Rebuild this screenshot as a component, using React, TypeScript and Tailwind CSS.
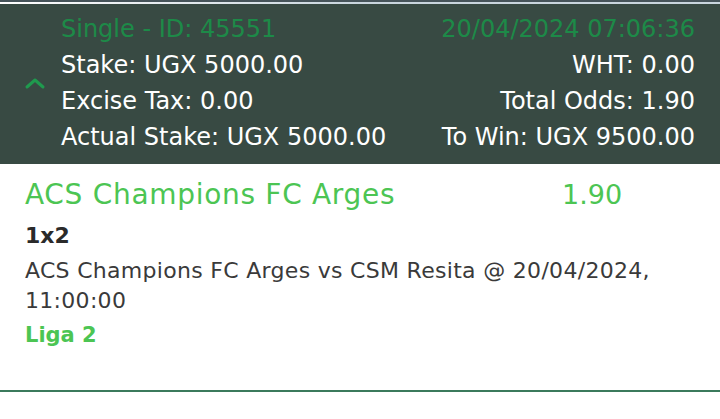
import React from "react";

const font = { fontFamily: '"DejaVu Sans", "Noto Sans", sans-serif' };

function Row({ left, right, className = "" }: { left: string; right: string; className?: string }) {
  return (
    <div className={"flex justify-between items-center h-[36px] " + className}>
      <span>{left}</span>
      <span>{right}</span>
    </div>
  );
}

export default function App() {
  return (
    <div className="w-[720px] h-[419px] bg-white overflow-hidden" style={font}>
      <div className="h-[2px] bg-[#46545a]" />
      <div className="h-[2px] bg-gradient-to-r from-[#ffffff] via-[#c9d6de] to-[#c9d6de]" />
      <div className="bg-[#384a43] flex pt-[7px] pb-[9px] pr-[25px]">
        <div className="w-[61px] flex items-center justify-center pl-[8px]">
          <svg width="22" height="14" viewBox="0 0 22 14" fill="none">
            <path d="M3 11 L11 4 L19 11" stroke="#1f9a4e" strokeWidth="3" strokeLinecap="round" strokeLinejoin="round" />
          </svg>
        </div>
        <div className="flex-1 text-[24px] text-white">
          <Row left="Single - ID: 45551" right="20/04/2024 07:06:36" className="text-[#1d8a48]" />
          <Row left="Stake: UGX 5000.00" right="WHT: 0.00" />
          <Row left="Excise Tax: 0.00" right="Total Odds: 1.90" />
          <Row left="Actual Stake: UGX 5000.00" right="To Win: UGX 9500.00" />
        </div>
      </div>
      <div className="px-[25px] pt-[12px]">
        <div className="flex items-center h-[38px] text-[28px] tracking-[0.7px] text-[#4cc553]">
          <span className="w-[537px]">ACS Champions FC Arges</span>
          <span className="tracking-normal text-[27px]">1.90</span>
        </div>
        <div className="h-[42px] flex items-center text-[22px] font-bold text-[#2a2a2a]">1x2</div>
        <div className="text-[22px] tracking-[0.3px] text-[#3a3a3a] leading-[30px]">
          ACS Champions FC Arges vs CSM Resita @ 20/04/2024,
          <br />
          11:00:00
        </div>
        <div className="h-[40px] flex items-center text-[21px] font-bold text-[#4cc553]">Liga 2</div>
      </div>
      <div className="mt-[34px] h-[2px] bg-[#3b7a5c]" />
    </div>
  );
}
